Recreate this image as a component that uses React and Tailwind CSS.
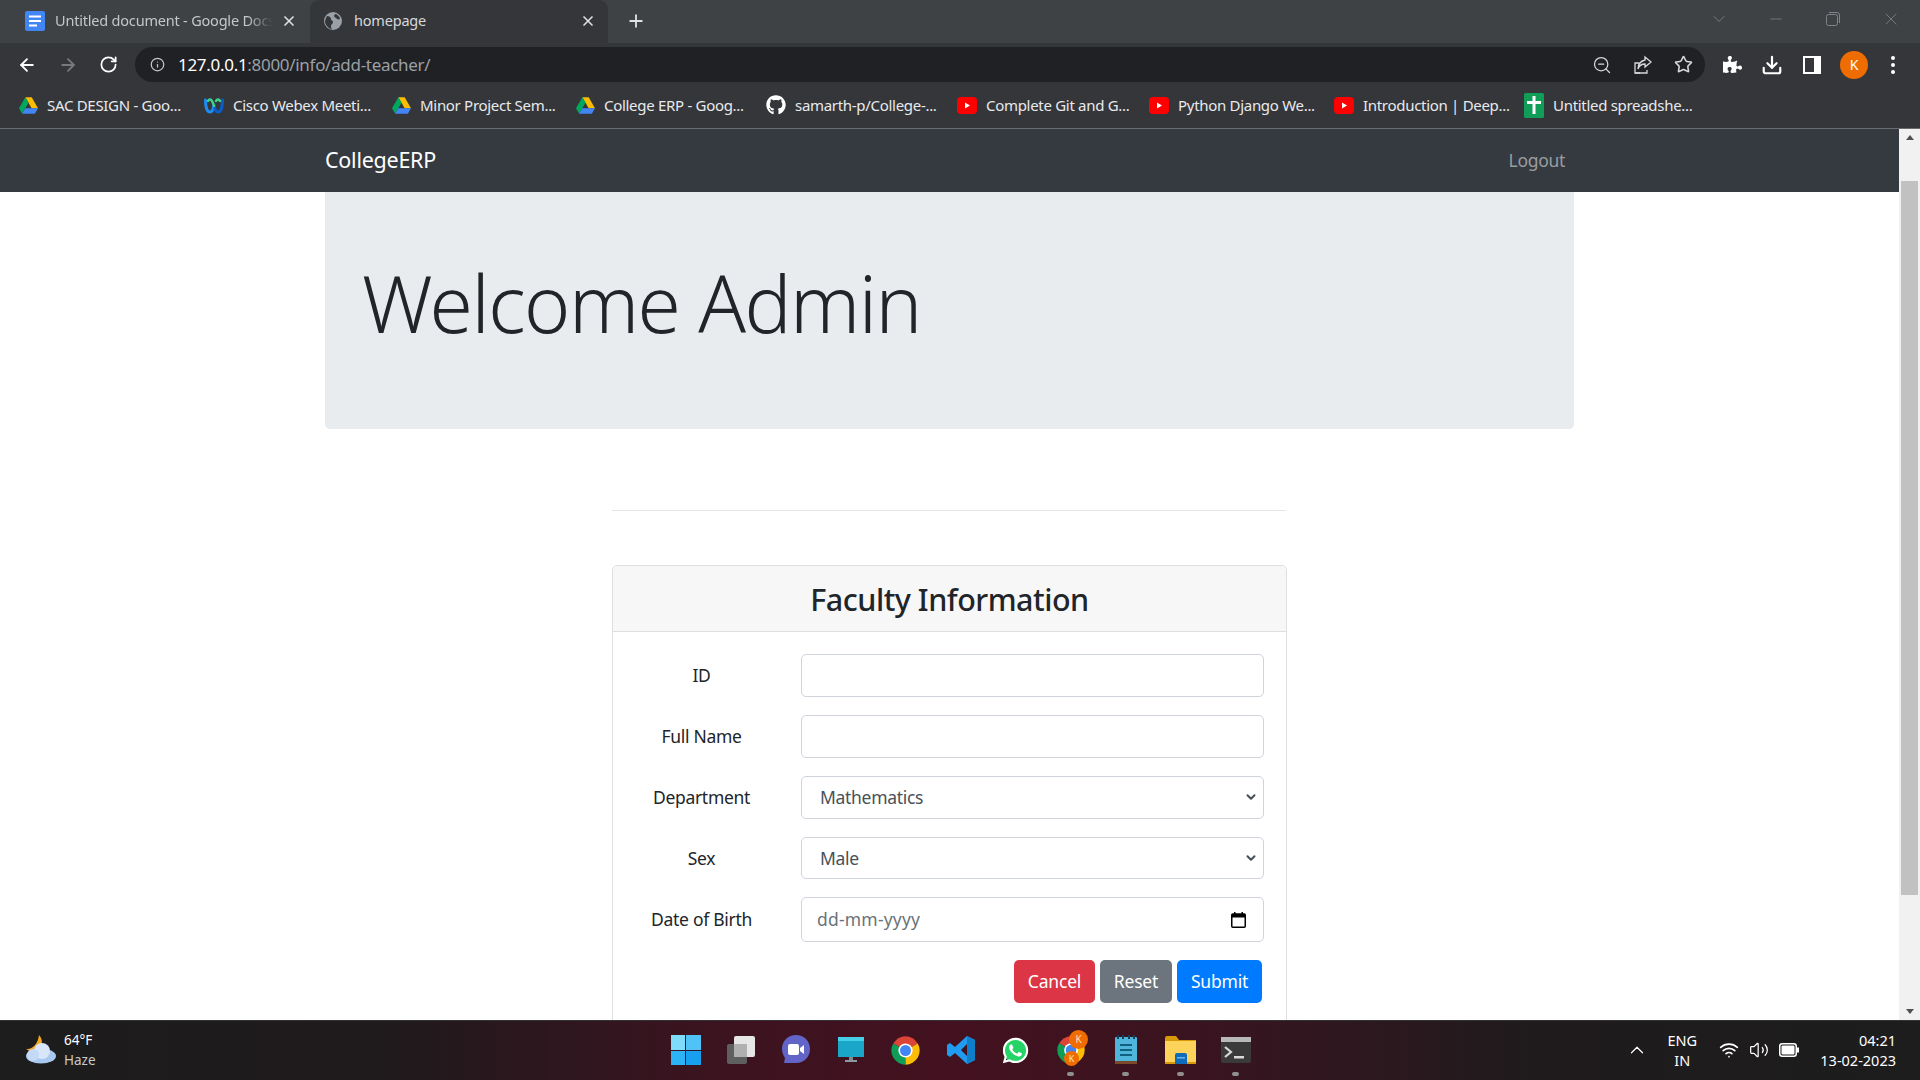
import React from "react";
import { ArrowLeft, ArrowRight, RotateCw, Info, X, Plus, ZoomOut, Star, Download, ChevronDown, Minus, ChevronUp, Wifi, Volume2 } from "lucide-react";
import { FaGithub, FaWhatsapp, FaPuzzlePiece } from "react-icons/fa";

const Drive = () => (
  <svg width="19" height="17" viewBox="0 0 24 21">
    <polygon points="8,0 16,0 24,14 16,14" fill="#fbbc04" />
    <polygon points="8,0 12,7 4,21 0,14" fill="#00a85d" />
    <polygon points="8,14 24,14 20,21 4,21" fill="#4285f4" />
  </svg>
);
const Yt = () => (
  <svg width="20" height="17" viewBox="0 0 20 17">
    <rect width="20" height="17" rx="4" fill="#ff0000" />
    <polygon points="8,5.500 13,8.500 8,11.500" fill="#fff" />
  </svg>
);
const Webex = () => (
  <svg width="20" height="17" viewBox="0 0 20 17" fill="none">
    <path d="M1.500 3c0 8 2 12 4.500 12s3-3 4-7" stroke="#1d8bf1" strokeWidth="3" strokeLinecap="round" />
    <path d="M18.500 3c0 8-2 12-4.500 12s-3-3-4-7" stroke="#0a5cc7" strokeWidth="3" strokeLinecap="round" />
    <path d="M4 4c1-2 3-2 4 0s2 5 2 5M16 4c-1-2-3-2-4 0" stroke="#3fd28a" strokeWidth="2.500" strokeLinecap="round" />
  </svg>
);
const Sheets = () => (
  <svg width="20" height="25" viewBox="0 0 20 25">
    <rect width="20" height="25" rx="1.500" fill="#0f9d58" />
    <rect x="3" y="8" width="14" height="3" fill="#fff" />
    <rect x="8.500" y="3" width="3" height="18" fill="#fff" />
  </svg>
);
const ChromeLogo = ({ size = 32 }) => (
  <svg width={size} height={size} viewBox="0 0 48 48">
    <path d="M24 24L5 13A22 22 0 0 1 43 13Z" fill="#db4437" />
    <path d="M24 24L5 13A22 22 0 0 0 24 46Z" fill="#0f9d58" />
    <path d="M24 24L43 13A22 22 0 0 1 24 46Z" fill="#fbbc04" />
    <circle cx="24" cy="24" r="11" fill="#fff" />
    <circle cx="24" cy="24" r="8.500" fill="#4285f4" />
  </svg>
);

const bookmarks = [
  { icon: <Drive />, text: "SAC DESIGN - Goo...", w: "w-[186px]" },
  { icon: <Webex />, text: "Cisco Webex Meeti...", w: "w-[187px]" },
  { icon: <Drive />, text: "Minor Project Sem...", w: "w-[184px]" },
  { icon: <Drive />, text: "College ERP - Goog...", w: "w-[191px]" },
  { icon: <FaGithub className="text-[20px] text-white" />, text: "samarth-p/College-...", w: "w-[191px]" },
  { icon: <Yt />, text: "Complete Git and G...", w: "w-[192px]" },
  { icon: <Yt />, text: "Python Django We...", w: "w-[185px]" },
  { icon: <Yt />, text: "Introduction | Deep...", w: "w-[190px]" },
  { icon: <Sheets />, text: "Untitled spreadshe...", w: "w-[200px]" },
];

const Row = ({ label, mt, h, children }) => (
  <div className={`grid grid-cols-[177px_463px] gap-x-[11px] items-center ${mt} ${h}`}>
    <label className="text-center text-[17.500px] tracking-[-0.3px] text-[#212529]">{label}</label>
    {children}
  </div>
);

const Select = ({ value }) => (
  <div className="relative h-full w-full">
    <select className="appearance-none h-full w-full border border-[#ced4da] rounded-[5px] bg-white pl-[18px] text-[17.500px] tracking-[-0.3px] text-[#495057]">
      <option>{value}</option>
    </select>
    <ChevronDown size={14} strokeWidth={3.500} className="absolute right-[6px] top-[14px] text-[#495057]" />
  </div>
);

const TaskIcon = ({ children, dot }) => (
  <div className="relative w-[55px] h-[58px] flex items-center justify-center">
    {children}
    {dot && <span className="absolute bottom-[3px] left-[24px] w-[7px] h-[4px] rounded-full bg-[#8f8f8f]" />}
  </div>
);

export default function App() {
  return (
    <div className="h-screen w-full flex flex-col overflow-hidden font-['Noto_Sans','Open_Sans',sans-serif] bg-white">
      {/* Tab strip */}
      <div className="h-[43px] shrink-0 bg-[#3e4245] flex items-stretch text-[14.500px] tracking-[-0.2px]">
        <div className="w-[310px] flex items-center pl-[25px] pr-[12px] pb-[2px]">
          <svg width="20" height="20" viewBox="0 0 20 20" className="shrink-0">
            <rect width="20" height="20" rx="2" fill="#4285f4" />
            <rect x="4" y="4.500" width="12" height="2" fill="#fff" />
            <rect x="4" y="9" width="12" height="2" fill="#fff" />
            <rect x="4" y="13.500" width="8" height="2" fill="#fff" />
          </svg>
          <span className="ml-[10px] w-[218px] overflow-hidden whitespace-nowrap text-[#c4c7ca] [mask-image:linear-gradient(90deg,#000_88%,transparent_100%)]">Untitled document - Google Docs</span>
          <X size={16} strokeWidth={2.500} className="ml-[8px] text-[#dfe1e5]" />
        </div>
        <div className="w-[298px] bg-[#35363a] rounded-t-[9px] flex items-center pl-[14px] pr-[12px] pb-[2px] text-[#d6d8db]">
          <svg width="18" height="18" viewBox="0 0 18 18" className="shrink-0">
            <circle cx="9" cy="9" r="9" fill="#9aa0a6" />
            <path d="M3 4c2 0 4 1 4 3s2 1 2 3-2 2-2 4c0 1 0 2 1 3-3 0-6-3-7-7 0-2 1-4 2-6ZM12 2c2 1 4 3 4 5-2 1-3 0-4-1s-2-1-2-2 1-2 2-2Z" fill="#35363a" />
          </svg>
          <span className="ml-[12px] flex-1">homepage</span>
          <X size={16} strokeWidth={2.500} className="text-[#dfe1e5]" />
        </div>
        <div className="ml-[18px] flex items-center pb-[2px]"><Plus size={20} strokeWidth={2.200} className="text-[#dfe1e5]" /></div>
        <div className="ml-auto flex items-center text-[#80858a] pr-[19px] pb-[6px]">
          <ChevronDown size={20} strokeWidth={1} />
          <Minus size={18} strokeWidth={1} className="ml-[38px]" />
          <svg width="16" height="16" viewBox="0 0 16 16" fill="none" stroke="currentColor" className="ml-[40px]">
            <rect x="1.500" y="3.500" width="11" height="11" rx="2" />
            <path d="M4 1.500h8a2.500 2.500 0 0 1 2.500 2.500v8" />
          </svg>
          <X size={20} strokeWidth={1} className="ml-[40px]" />
        </div>
      </div>
      {/* Toolbar */}
      <div className="h-[44px] shrink-0 bg-[#35363a] flex items-center pb-[1px] text-[#dfe1e5]">
        <div className="w-[135px] flex items-center pl-[17px] gap-[21px]">
          <ArrowLeft size={20} strokeWidth={2.200} className="text-white" />
          <ArrowRight size={20} strokeWidth={2.200} className="text-[#777a7d]" />
          <RotateCw size={19} strokeWidth={2.200} className="text-white" />
        </div>
        <div className="w-[1570px] h-[35px] rounded-full bg-[#202124] flex items-center pl-[15px] pr-[12px]">
          <Info size={15} strokeWidth={2} className="text-[#c4c7ca]" />
          <span className="ml-[13px] text-[17px] tracking-[-0.3px] text-white">127.0.0.1<span className="text-[#9aa0a6]">:8000/info/add-teacher/</span></span>
          <div className="ml-auto flex items-center gap-[21px] text-[#d6d8db]">
            <ZoomOut size={20} strokeWidth={1.500} />
            <svg width="20" height="20" viewBox="0 0 20 20" fill="none" stroke="currentColor" strokeWidth="1.300">
              <path d="M7 18H2V8h4" />
              <path d="M2 18h12v-3" />
              <path d="M12 2l6 5-6 5V9C8 9 6 11 5 14c0-5 3-8 7-9Z" />
            </svg>
            <Star size={19} strokeWidth={2} />
          </div>
        </div>
        <div className="flex-1 flex items-center pl-[18px]">
          <FaPuzzlePiece className="text-[19px] text-white" />
          <Download size={22} strokeWidth={2.400} className="ml-[19px] text-white" />
          <svg width="18" height="18" viewBox="0 0 18 18" className="ml-[20px]">
            <rect x="1" y="1" width="16" height="16" fill="none" stroke="#fff" strokeWidth="2" />
            <rect x="11" y="1" width="6" height="16" fill="#fff" />
          </svg>
          <span className="ml-[19px] w-[28px] h-[28px] rounded-full bg-[#ef6c00] text-white text-[14px] flex items-center justify-center">K</span>
          <span className="ml-[23px] flex flex-col gap-[3px]">
            <i className="block w-[4px] h-[4px] rounded-full bg-white" />
            <i className="block w-[4px] h-[4px] rounded-full bg-white" />
            <i className="block w-[4px] h-[4px] rounded-full bg-white" />
          </span>
        </div>
      </div>
      {/* Bookmarks */}
      <div className="h-[42px] shrink-0 bg-[#35363a] border-b border-[#6a6b6e] flex items-center pl-[18px] pb-[5px] text-[15px] tracking-[-0.3px] text-[#e8eaed]">
        {bookmarks.map((b, i) => (
          <div key={i} className={`flex items-center shrink-0 ${b.w}`}>
            <span className="w-[20px] flex justify-center shrink-0">{b.icon}</span>
            <span className="ml-[9px] whitespace-nowrap">{b.text}</span>
          </div>
        ))}
      </div>
      {/* Page */}
      <div className="flex-1 min-h-0 flex">
        <div className="flex-1 min-w-0 flex flex-col overflow-hidden">
          <nav className="h-[63px] shrink-0 bg-[#343a40] flex items-center justify-between pl-[325px] pr-[334px]">
            <span className="text-[21.500px] tracking-[-0.25px] text-white">CollegeERP</span>
            <span className="text-[17.500px] tracking-[-0.3px] text-[#9a9da0]">Logout</span>
          </nav>
          <div className="w-[1249px] h-[237px] ml-[325px] shrink-0 bg-[#e9ecef] rounded-b-[5px] flex items-center pl-[37px] pb-[15px]">
            <h1 className="text-[78.500px] font-light tracking-[-1.500px] text-[#212529]">Welcome Admin</h1>
          </div>
          <hr className="w-[674px] ml-[612px] mt-[81px] border-t border-[#e6e6e6] shrink-0" />
          <div className="w-[675px] ml-[612px] mt-[54px] shrink-0 border border-[#dfdfdf] rounded-[5px] pb-[40px]">
            <div className="h-[66px] bg-[#f7f7f7] border-b border-[#dfdfdf] rounded-t-[5px] flex items-center justify-center pt-[2px]">
              <h3 className="text-[30.500px] font-medium tracking-[-0.5px] text-[#212529]">Faculty Information</h3>
            </div>
            <Row label="ID" mt="mt-[22px]" h="h-[43px]">
              <input className="h-full w-full border border-[#ced4da] rounded-[5px] bg-white" />
            </Row>
            <Row label="Full Name" mt="mt-[18px]" h="h-[43px]">
              <input className="h-full w-full border border-[#ced4da] rounded-[5px] bg-white" />
            </Row>
            <Row label="Department" mt="mt-[18px]" h="h-[43px]">
              <Select value="Mathematics" />
            </Row>
            <Row label="Sex" mt="mt-[18px]" h="h-[42px]">
              <Select value="Male" />
            </Row>
            <Row label="Date of Birth" mt="mt-[18px]" h="h-[45px]">
              <div className="h-full w-full border border-[#ced4da] rounded-[5px] bg-white flex items-center justify-between pl-[15px] pr-[17px] text-[17.500px] tracking-[0.2px] text-[#6a7178]">
                <span>dd-mm-yyyy</span>
                <svg width="15" height="16" viewBox="0 0 15 16">
                  <rect x="0.750" y="2" width="13.500" height="13.250" rx="1" fill="none" stroke="#000" strokeWidth="1.500" />
                  <rect x="0.750" y="2" width="13.500" height="3.500" fill="#000" />
                  <rect x="3" y="0" width="1.500" height="2.500" fill="#000" />
                  <rect x="10.500" y="0" width="1.500" height="2.500" fill="#000" />
                </svg>
              </div>
            </Row>
            <div className="flex justify-end gap-[5px] mt-[18px] pr-[24px] text-[17.500px] tracking-[-0.2px] text-white">
              <button className="h-[43px] w-[81px] rounded-[5px] bg-[#dc3545]">Cancel</button>
              <button className="h-[43px] w-[72px] rounded-[5px] bg-[#6c757d]">Reset</button>
              <button className="h-[43px] w-[85px] rounded-[5px] bg-[#007bff]">Submit</button>
            </div>
          </div>
        </div>
        {/* Scrollbar */}
        <div className="w-[21px] shrink-0 bg-[#f1f1f1] flex flex-col items-center">
          <div className="h-[17px] flex items-center justify-center">
            <span className="w-0 h-0 border-x-[4.500px] border-x-transparent border-b-[5px] border-b-[#505050]" />
          </div>
          <div className="mt-[35px] w-[17px] h-[714px] bg-[#c1c1c1]" />
          <div className="mt-auto h-[17px] flex items-center justify-center">
            <span className="w-0 h-0 border-x-[4.500px] border-x-transparent border-t-[5px] border-t-[#505050]" />
          </div>
        </div>
      </div>
      {/* Taskbar */}
      <div className="h-[60px] shrink-0 border-t border-[#333235] grid grid-cols-[1fr_auto_1fr] bg-[linear-gradient(90deg,#1d1d1d_0%,#1f1a1c_20%,#3d1320_38%,#43111f_50%,#3a1420_62%,#1f1b1d_80%,#1d1d1d_100%)]">
        <div className="flex items-center pl-[25px] pb-[2px]">
          <svg width="32" height="32" viewBox="0 0 32 32">
            <path d="M14 1a10 10 0 0 1 1 13 10 10 0 0 1-14 1c6 1 12-5 13-14Z" fill="#f5a623" />
            <ellipse cx="16" cy="22" rx="15" ry="7.500" fill="#a9c8f0" />
            <circle cx="17" cy="17" r="8" fill="#d7e6fa" />
            <circle cx="8" cy="21" r="6" fill="#c3d9f5" />
          </svg>
          <div className="ml-[7px] flex flex-col text-[13.500px] leading-[20px]">
            <span className="text-white">64°F</span>
            <span className="text-[#c9c9c9]">Haze</span>
          </div>
        </div>
        <div className="flex items-start ml-[1px]">
          <TaskIcon>
            <div className="grid grid-cols-2 gap-[1px] w-[30px] h-[30px]">
              <i className="bg-[#7fdcfb]" /><i className="bg-[#4fc3f7]" /><i className="bg-[#2bb3f5]" /><i className="bg-[#18a0f0]" />
            </div>
          </TaskIcon>
          <TaskIcon>
            <svg width="30" height="30" viewBox="0 0 30 30">
              <rect x="1" y="9" width="20" height="20" rx="2" fill="#5f5f5f" />
              <rect x="8" y="1" width="21" height="21" rx="2" fill="#e6e6e6" />
              <rect x="8" y="9" width="13" height="13" fill="#b0b0b0" />
            </svg>
          </TaskIcon>
          <TaskIcon>
            <svg width="30" height="32" viewBox="0 0 30 32">
              <path d="M15 1c8 0 14 6 14 14s-6 14-14 14H3l1-5C2 21 1 18 1 15 1 7 7 1 15 1Z" fill="#6264c8" />
              <rect x="7" y="10" width="11" height="11" rx="2" fill="#fff" />
              <path d="M19 14l4-3v9l-4-3Z" fill="#fff" />
            </svg>
          </TaskIcon>
          <TaskIcon>
            <svg width="28" height="28" viewBox="0 0 28 28">
              <rect x="1" y="1" width="26" height="20" fill="#1aa6c9" />
              <rect x="1" y="1" width="26" height="4" fill="#45d0e8" />
              <rect x="12" y="21" width="4" height="3" fill="#7b8b90" />
              <rect x="8" y="24" width="12" height="2" fill="#8b9aa0" />
            </svg>
          </TaskIcon>
          <TaskIcon><ChromeLogo size={31} /></TaskIcon>
          <TaskIcon>
            <svg width="30" height="30" viewBox="0 0 30 30">
              <path d="M21 1l8 4v20l-8 4L9 18l-5 4-3-2V10l3-2 5 4Zm0 8l-6 6 6 6Z" fill="#1f9cf0" />
              <path d="M21 1l8 4v20l-8 4Z" fill="#0f7ec9" />
            </svg>
          </TaskIcon>
          <TaskIcon>
            <span className="w-[25px] h-[25px] flex items-center justify-center rounded-full bg-[#25d366]">
              <FaWhatsapp className="text-[29px] text-white shrink-0" />
            </span>
          </TaskIcon>
          <TaskIcon dot>
            <ChromeLogo size={30} />
            <span className="absolute top-[9px] left-[26px] w-[19px] h-[19px] rounded-full bg-[#ef6c00] text-[10px] text-[#fde0c5] flex items-center justify-center">K</span>
            <span className="absolute top-[30px] left-[21px] w-[15px] h-[15px] rounded-full bg-[#ef6c00] text-[9px] text-[#fde0c5] flex items-center justify-center">K</span>
          </TaskIcon>
          <TaskIcon dot>
            <svg width="24" height="30" viewBox="0 0 24 30">
              <rect x="1" y="2" width="22" height="27" rx="1" fill="#4fb5da" />
              <rect x="1" y="26" width="22" height="3" fill="#7a4a2a" />
              <rect x="3" y="0" width="2" height="4" fill="#10445e" /><rect x="8" y="0" width="2" height="4" fill="#10445e" /><rect x="14" y="0" width="2" height="4" fill="#10445e" /><rect x="19" y="0" width="2" height="4" fill="#10445e" />
              <rect x="6" y="9" width="12" height="2" fill="#10607f" /><rect x="6" y="14" width="12" height="2" fill="#10607f" /><rect x="6" y="19" width="12" height="2" fill="#10607f" />
            </svg>
          </TaskIcon>
          <TaskIcon dot>
            <svg width="31" height="28" viewBox="0 0 31 28">
              <path d="M0 2a2 2 0 0 1 2-2h9l3 4h17v24H0Z" fill="#d99a0a" />
              <rect x="0" y="5" width="31" height="23" fill="#fdd35c" />
              <rect x="0" y="26" width="31" height="2" fill="#d99a0a" />
              <path d="M10 24v-5a2 2 0 0 1 2-2h8a2 2 0 0 1 2 2v9H10Z" fill="#0f6cbd" />
              <rect x="12" y="21" width="8" height="1.500" fill="#6fb3e8" />
            </svg>
          </TaskIcon>
          <TaskIcon dot>
            <svg width="30" height="26" viewBox="0 0 30 26">
              <rect width="30" height="26" rx="2" fill="#3a3a3a" />
              <rect width="30" height="5" fill="#b8b8b8" />
              <path d="M4 10l6 5-6 5" fill="none" stroke="#d9d9d9" strokeWidth="2.200" />
              <rect x="13" y="19" width="10" height="2.500" fill="#d9d9d9" />
            </svg>
          </TaskIcon>
        </div>
        <div className="flex items-center justify-end pr-[24px] pb-[2px] text-white text-[14.500px] leading-[20px]">
          <ChevronUp size={22} strokeWidth={1.300} />
          <div className="ml-[17px] w-[34px] text-center leading-[20px]"><div>ENG</div><div>IN</div></div>
          <Wifi size={20} strokeWidth={2} className="ml-[20px]" />
          <Volume2 size={20} strokeWidth={1.500} className="ml-[10px]" />
          <svg width="20" height="14" viewBox="0 0 20 14" className="ml-[10px]">
            <rect x="0.750" y="0.750" width="16.500" height="12.500" rx="2.500" fill="none" stroke="#fff" strokeWidth="1.500" />
            <rect x="2.500" y="2.500" width="13" height="9" rx="1" fill="#fff" />
            <rect x="18" y="4.500" width="2" height="5" fill="#fff" />
          </svg>
          <div className="ml-[21px] text-right"><div>04:21</div><div>13-02-2023</div></div>
        </div>
      </div>
    </div>
  );
}
